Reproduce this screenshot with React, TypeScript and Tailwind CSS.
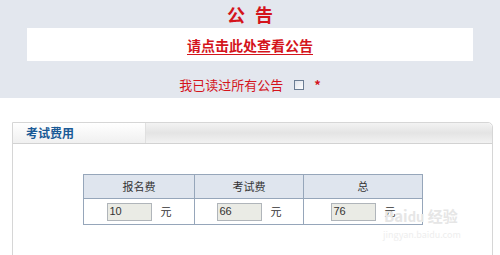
import React from 'react';

const fees = [
  { label: '报名费', value: '10' },
  { label: '考试费', value: '66' },
  { label: '总', value: '76' },
];

export default function App() {
  return (
    <div className="w-[500px] h-[255px] overflow-hidden bg-white font-['Noto_Sans_CJK_SC',sans-serif]">
      {/* notice area */}
      <div className="h-[98px] bg-[#e3e7ee] flex flex-col items-center">
        <div className="mt-[1px] h-[26px] flex items-center text-[18px] font-bold text-[#d4141c] tracking-[10px] pl-[10px]">
          公告
        </div>
        <div className="mt-[1px] w-[446px] h-[33px] bg-white flex items-center justify-center">
          <a className="text-[14px] font-bold text-[#d4141c] underline underline-offset-[3px] leading-none">
            请点击此处查看公告
          </a>
        </div>
        <div className="mt-[17px] flex items-center text-[13px] text-[#d4141c] leading-none">
          <span>我已读过所有公告</span>
          <span className="ml-[11px] w-[10px] h-[10px] border border-[#6b7d93] bg-gradient-to-br from-[#dfe3ea] to-white" />
          <span className="ml-[10px] text-[13px] font-bold">*</span>
        </div>
      </div>

      {/* exam fee panel */}
      <div className="mt-[24px] ml-[12px] w-[481px] h-[140px] border border-[#d6d6d6] rounded-tr-[5px]">
        <div className="h-[21px] flex border-b border-[#d2d2d2] bg-gradient-to-b from-[#f3f3f3] via-[#e4e4e4] to-[#f2f2f2] rounded-tr-[5px]">
          <div className="w-[133px] flex items-center pl-[13px] bg-gradient-to-b from-white to-[#f0f0f0] border-r border-[#e0e0e0] text-[12px] font-bold text-[#1a5a96]">
            考试费用
          </div>
        </div>
        <div className="pt-[30px] pl-[70px] relative">
          <table className="border-collapse text-[11px] text-[#333]">
            <thead>
              <tr className="h-[24px] bg-[#dfe5ee]">
                {fees.map((f, i) => (
                  <th
                    key={f.label}
                    className={`border border-[#96a6ba] font-normal ${i === 2 ? 'w-[119px]' : i === 1 ? 'w-[109px]' : 'w-[111px]'}`}
                  >
                    {f.label}
                  </th>
                ))}
              </tr>
            </thead>
            <tbody>
              <tr className="h-[26px]">
                {fees.map((f) => (
                  <td key={f.label} className="border border-[#96a6ba] text-center">
                    <div className="flex items-center justify-center gap-[9px]">
                      <span className="w-[45px] h-[18px] border border-[#b0b5ba] bg-[#eaebe5] flex items-center pl-[2px] text-[11px] font-['Liberation_Sans',sans-serif]">
                        {f.value}
                      </span>
                      <span>元</span>
                    </div>
                  </td>
                ))}
              </tr>
            </tbody>
          </table>
          <div className="absolute left-[371px] top-[64px] text-[#e6e6e6] text-[15px] font-bold leading-none select-none">
            Bai<span className="text-[13px]">du</span> 经验
          </div>
          <div className="absolute left-[370px] top-[86px] text-[#eeeeee] text-[9px] leading-none select-none">
            jingyan.baidu.com
          </div>
        </div>
      </div>
    </div>
  );
}
